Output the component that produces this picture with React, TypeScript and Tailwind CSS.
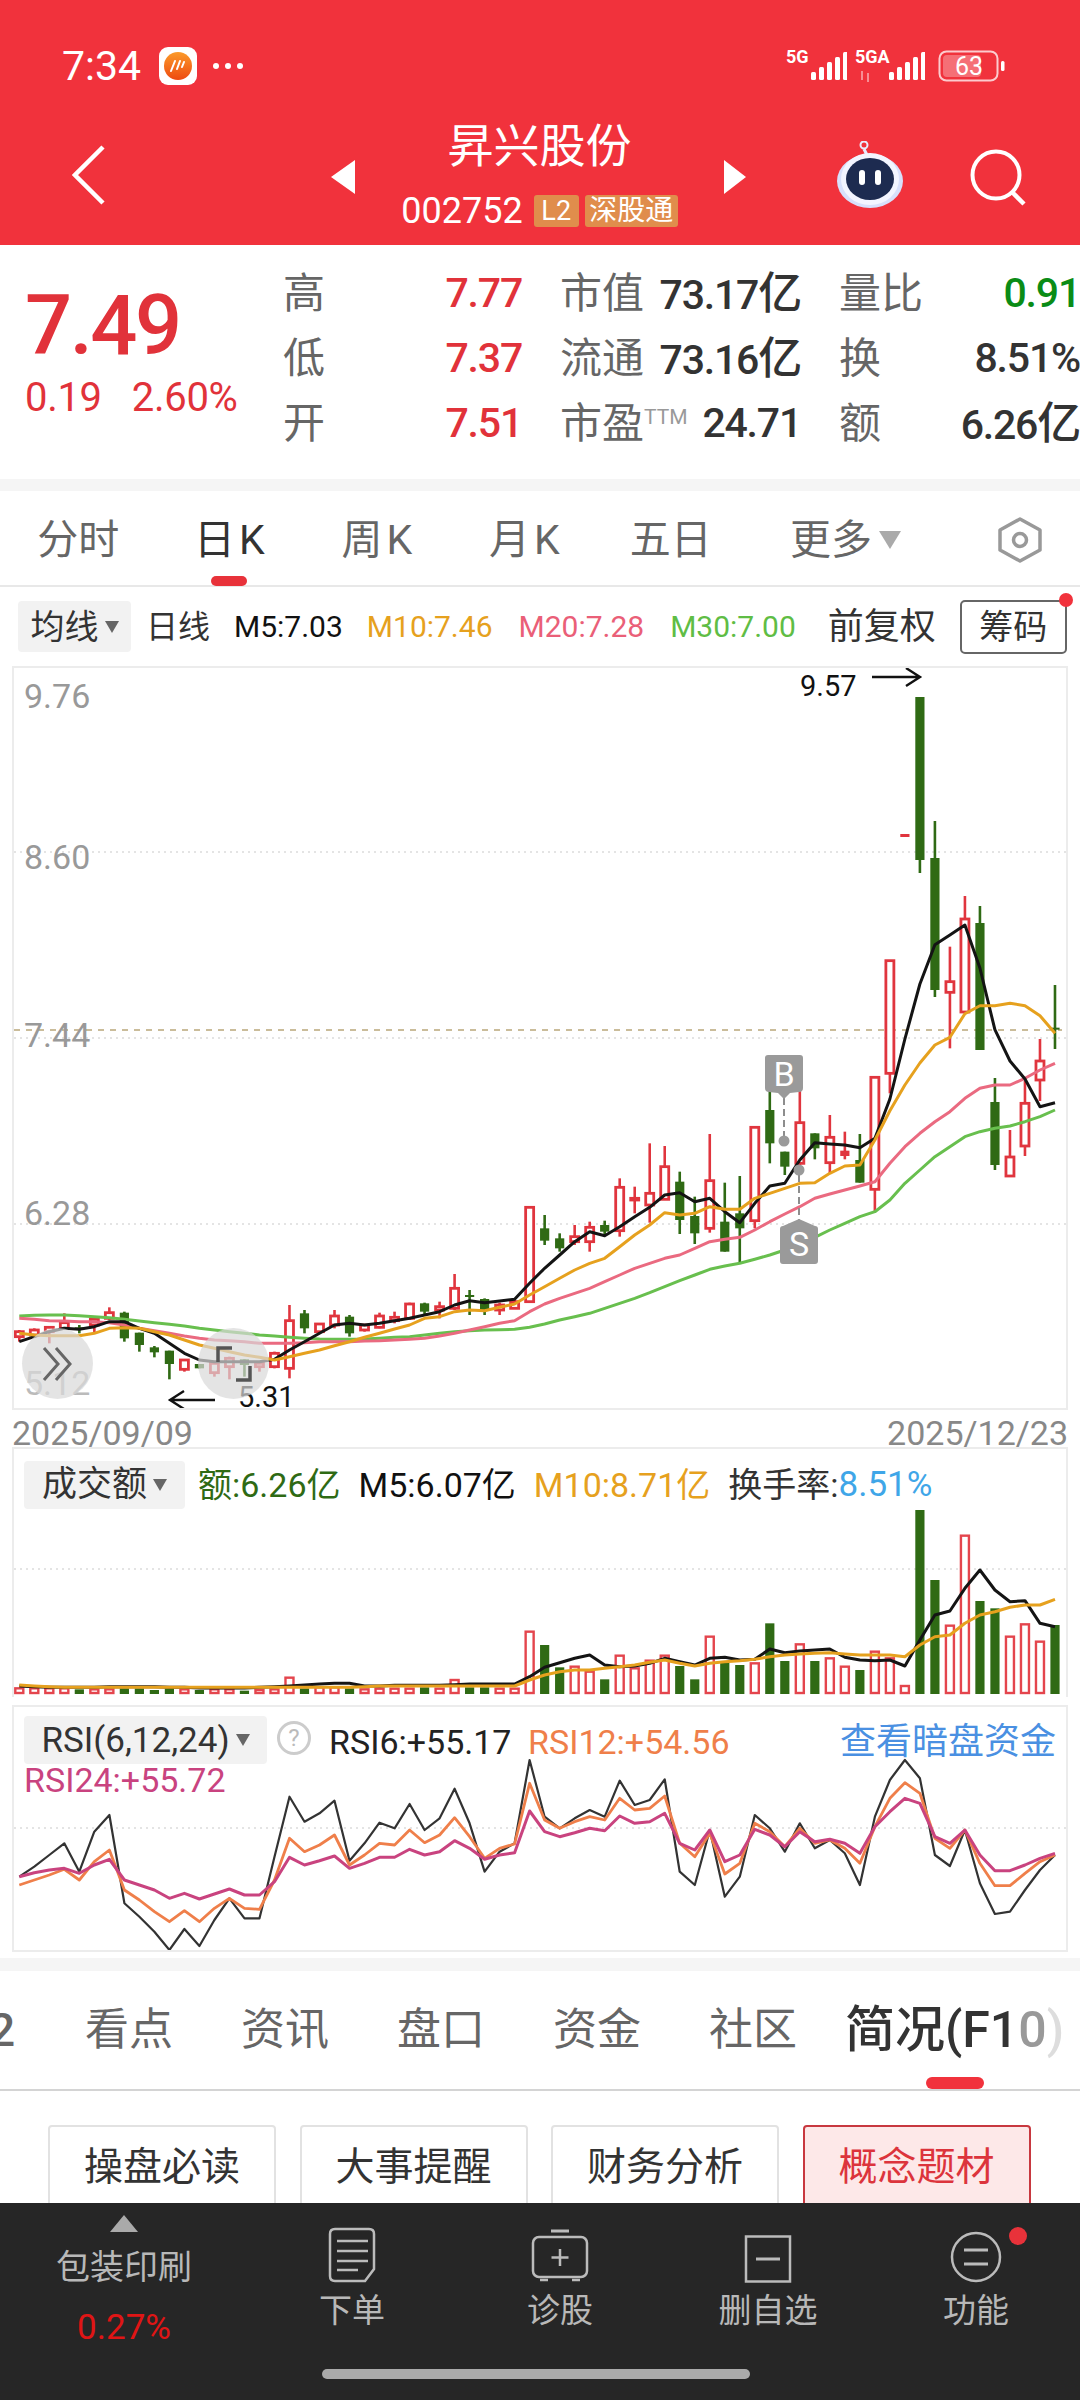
import React from "react";

const x = (i: number) => 19.3 + 15.01 * i;
const RED = "#e0353e";
const GRN = "#2f6a14";

type C = [string, number, number, number, number];
// kind, high, bodyTop, bodyBottom, low (coordinates measured from y = 1000, in thirds of a pixel)
const candles: C[] = [
  ["r", 990, 995, 1010, 1025], ["r", 985, 990, 1005, 1010], ["r", 980, 982, 995, 1030], ["r", 940, 968, 985, 990], ["g", 975, 982, 990, 1000],
  ["r", 950, 958, 975, 1000], ["r", 922, 938, 955, 960], ["g", 935, 938, 1015, 1025], ["g", 998, 998, 1035, 1055], ["g", 1038, 1042, 1057, 1072],
  ["g", 1052, 1052, 1092, 1138], ["r", 1078, 1080, 1108, 1115], ["g", 1092, 1092, 1105, 1105], ["r", 1085, 1090, 1118, 1130], ["r", 1070, 1075, 1100, 1138],
  ["g", 1078, 1078, 1095, 1130], ["r", 1085, 1090, 1100, 1115], ["r", 1055, 1060, 1100, 1105], ["r", 915, 962, 1105, 1135], ["g", 930, 940, 985, 1000],
  ["r", 970, 972, 995, 998], ["r", 930, 948, 975, 985], ["g", 945, 950, 1000, 1010], ["r", 972, 975, 990, 995], ["r", 938, 948, 982, 985],
  ["r", 935, 952, 962, 970], ["r", 908, 912, 955, 960], ["g", 908, 910, 935, 945], ["r", 905, 920, 930, 955], ["r", 822, 865, 925, 930],
  ["g", 870, 885, 890, 945], ["g", 895, 897, 930, 945], ["r", 908, 915, 930, 945], ["r", 900, 905, 925, 925], ["r", 622, 622, 905, 905],
  ["g", 645, 685, 722, 735], ["g", 700, 715, 745, 755], ["r", 675, 710, 725, 735], ["r", 665, 682, 725, 755], ["g", 662, 675, 695, 705],
  ["r", 535, 562, 692, 710], ["r", 560, 595, 600, 640], ["r", 430, 580, 615, 668], ["r", 438, 500, 598, 600], ["g", 515, 545, 660, 702],
  ["g", 590, 648, 700, 732], ["r", 402, 542, 685, 698], ["g", 548, 665, 755, 755], ["g", 528, 640, 685, 790], ["r", 382, 382, 662, 685],
  ["g", 245, 330, 430, 490], ["g", 455, 455, 500, 525], ["r", 185, 368, 490, 520], ["g", 400, 400, 445, 478], ["r", 345, 412, 488, 520],
  ["f", 395, 452, 468, 478], ["g", 402, 480, 548, 548], ["r", 232, 232, 568, 635], ["r", -118, -118, 220, 280], ["f", -498, -498, -490, -490],
  ["g", -909, -909, -420, -381], ["g", -537, -426, -30, -9], ["r", -160, -55, -23, 145], ["r", -312, -243, 36, 36], ["g", -282, -231, 150, 150],
  ["g", 234, 306, 495, 510], ["r", 390, 471, 528, 528], ["r", 243, 310, 438, 468], ["r", 117, 183, 240, 303], ["g", -45, 83, 88, 147],
];
const ma5 = [1025, 1010, 995, 985, 988, 980, 965, 965, 985, 1000, 1030, 1060, 1080, 1085, 1085, 1085, 1085, 1078, 1050, 1025, 1000, 975, 970, 975, 970, 962, 955, 945, 935, 915, 902, 908, 903, 898, 850, 805, 765, 725, 695, 707, 680, 650, 622, 585, 578, 605, 595, 635, 668, 610, 558, 550, 480, 428, 432, 435, 443, 415, 297, 117, -48, -166, -195, -225, -96, 89, 183, 237, 320, 308];
const ma10 = [1000, 1005, 1007, 1007, 1007, 1000, 985, 983, 985, 995, 1005, 1020, 1035, 1045, 1055, 1065, 1072, 1080, 1070, 1060, 1050, 1037, 1025, 1012, 1000, 987, 975, 955, 950, 935, 930, 932, 922, 912, 885, 860, 835, 810, 790, 775, 740, 705, 675, 638, 645, 640, 620, 628, 628, 595, 580, 565, 550, 548, 520, 498, 495, 420, 332, 255, 189, 135, 112, 41, 17, 17, 10, 17, 47, 100];
const ma20 = [955, 958, 962, 963, 965, 965, 968, 975, 985, 992, 1000, 1008, 1015, 1020, 1022, 1025, 1030, 1030, 1030, 1028, 1025, 1025, 1025, 1023, 1022, 1020, 1018, 1015, 1008, 1000, 990, 980, 970, 962, 935, 912, 895, 880, 865, 845, 825, 805, 790, 775, 765, 745, 725, 718, 712, 690, 665, 642, 620, 595, 582, 570, 558, 545, 490, 440, 400, 365, 335, 295, 265, 255, 255, 235, 210, 190];
const ma30 = [948, 946, 945, 945, 947, 950, 953, 958, 963, 968, 973, 978, 985, 990, 995, 1000, 1005, 1008, 1012, 1015, 1017, 1018, 1018, 1017, 1015, 1012, 1010, 1005, 1000, 995, 992, 990, 989, 988, 982, 972, 960, 950, 940, 925, 910, 895, 878, 860, 842, 825, 808, 798, 790, 778, 765, 750, 735, 712, 690, 670, 650, 635, 600, 550, 510, 470, 440, 410, 395, 385, 378, 365, 350, 330];

const vols: [string, number][] = [
  ["r", 715], ["r", 715], ["r", 715], ["r", 715], ["g", 718], ["r", 718], ["r", 718], ["g", 715], ["g", 715], ["g", 720],
  ["g", 715], ["r", 718], ["g", 720], ["r", 718], ["r", 718], ["g", 722], ["r", 720], ["r", 718], ["r", 683], ["g", 715],
  ["r", 712], ["r", 712], ["g", 715], ["r", 718], ["r", 716], ["r", 716], ["r", 716], ["g", 712], ["r", 716], ["r", 690],
  ["g", 712], ["g", 712], ["r", 716], ["r", 716], ["r", 545], ["g", 585], ["g", 652], ["r", 650], ["r", 665], ["g", 688],
  ["r", 617], ["r", 655], ["r", 632], ["r", 617], ["g", 648], ["g", 688], ["r", 560], ["g", 635], ["g", 645], ["r", 640],
  ["g", 520], ["g", 633], ["r", 583], ["g", 633], ["r", 625], ["r", 650], ["g", 660], ["r", 605], ["r", 625], ["r", 708],
  ["g", 178], ["g", 390], ["r", 527], ["r", 257], ["g", 453], ["g", 475], ["r", 560], ["r", 523], ["r", 575], ["g", 525],
];
const vm5 = [708, 710, 712, 712, 712, 712, 710, 710, 710, 710, 712, 712, 714, 714, 714, 714, 712, 710, 708, 705, 702, 700, 700, 708, 708, 706, 706, 706, 706, 704, 702, 702, 702, 702, 680, 652, 638, 625, 615, 645, 650, 648, 640, 625, 635, 645, 625, 622, 630, 628, 597, 608, 603, 600, 597, 622, 630, 632, 630, 648, 570, 495, 483, 415, 360, 420, 455, 452, 520, 530];
const vm10 = [705, 708, 710, 712, 712, 712, 712, 712, 712, 712, 712, 712, 712, 712, 712, 712, 712, 712, 712, 712, 712, 712, 712, 710, 708, 708, 708, 708, 708, 708, 708, 708, 708, 708, 690, 675, 665, 660, 660, 655, 650, 645, 637, 630, 640, 648, 640, 635, 632, 628, 620, 615, 612, 610, 608, 612, 615, 615, 615, 620, 585, 560, 555, 520, 495, 485, 472, 465, 465, 448];
const r6 = [1280, 1250, 1215, 1180, 1265, 1145, 1095, 1360, 1400, 1445, 1500, 1437, 1488, 1410, 1345, 1405, 1405, 1220, 1040, 1115, 1090, 1052, 1232, 1180, 1118, 1135, 1062, 1140, 1105, 1016, 1120, 1265, 1205, 1180, 930, 1100, 1135, 1105, 1080, 1100, 992, 1065, 1050, 988, 1265, 1305, 1140, 1340, 1280, 1095, 1135, 1205, 1120, 1195, 1170, 1210, 1305, 1100, 990, 930, 985, 1215, 1248, 1140, 1300, 1392, 1385, 1320, 1260, 1215];
const r12 = [1305, 1290, 1275, 1258, 1290, 1235, 1200, 1320, 1350, 1385, 1415, 1382, 1415, 1375, 1345, 1375, 1378, 1290, 1165, 1205, 1185, 1155, 1245, 1215, 1180, 1185, 1140, 1178, 1155, 1103, 1160, 1225, 1195, 1182, 1000, 1110, 1135, 1115, 1100, 1110, 1045, 1080, 1075, 1038, 1180, 1220, 1150, 1272, 1240, 1120, 1145, 1190, 1135, 1180, 1170, 1195, 1240, 1130, 1045, 998, 1030, 1165, 1195, 1140, 1240, 1307, 1307, 1270, 1235, 1215];
const r24 = [1280, 1268, 1260, 1255, 1270, 1245, 1228, 1290, 1305, 1320, 1345, 1330, 1347, 1332, 1317, 1335, 1335, 1295, 1222, 1245, 1232, 1218, 1255, 1240, 1222, 1222, 1198, 1215, 1205, 1172, 1195, 1228, 1215, 1208, 1083, 1145, 1160, 1148, 1135, 1142, 1098, 1120, 1115, 1090, 1180, 1200, 1140, 1235, 1215, 1138, 1155, 1190, 1145, 1175, 1168, 1180, 1210, 1130, 1085, 1045, 1060, 1160, 1180, 1140, 1215, 1262, 1262, 1245, 1225, 1210];

const py = (v: number) => 1000 + v / 3;
const pv = (v: number) => 1450 + v / 3;
const pts = (a: number[], f: (n: number) => number) => a.map((v, i) => `${x(i).toFixed(1)},${f(v).toFixed(1)}`).join(" ");

function Line({ d, f, c, w = 3 }: { d: number[]; f: (n: number) => number; c: string; w?: number }) {
  return <polyline points={pts(d, f)} fill="none" stroke={c} strokeWidth={w} strokeLinejoin="round" />;
}

function MainChart() {
  return (
    <svg viewBox="14 668 1052 740" width={1052} height={740} className="block">
      {[852, 1038, 1224].map((y) => (
        <line key={y} x1={14} x2={1066} y1={y} y2={y} stroke="#dcdcdc" strokeWidth={1.5} strokeDasharray="2 4" />
      ))}
      <line x1={14} x2={1062} y1={1030} y2={1030} stroke="#b9a679" strokeWidth={1.5} strokeDasharray="6 6" />
      {candles.map(([k, hi, t, b, lo], i) => {
        const cx = x(i);
        const col = k === "g" ? GRN : RED;
        if (k === "g")
          return (
            <g key={i}>
              <line x1={cx} x2={cx} y1={py(hi)} y2={py(lo)} stroke={col} strokeWidth={2.6} />
              <rect x={cx - 4.6} y={py(t)} width={9.2} height={Math.max(py(b) - py(t), 2)} fill={col} />
            </g>
          );
        if (k === "f")
          return (
            <g key={i}>
              <line x1={cx} x2={cx} y1={py(hi)} y2={py(lo)} stroke={col} strokeWidth={2.6} />
              <rect x={cx - 4.6} y={py(t)} width={9.2} height={Math.max(py(b) - py(t), 3)} fill={col} />
            </g>
          );
        return (
          <g key={i}>
            <line x1={cx} x2={cx} y1={py(hi)} y2={py(t)} stroke={col} strokeWidth={2.6} />
            <line x1={cx} x2={cx} y1={py(b)} y2={py(lo)} stroke={col} strokeWidth={2.6} />
            <rect x={cx - 4} y={py(t)} width={8} height={py(b) - py(t)} fill="#fff" stroke={col} strokeWidth={2.8} />
          </g>
        );
      })}
      <Line d={ma30} f={py} c="#68bf4e" />
      <Line d={ma20} f={py} c="#ea6a80" />
      <Line d={ma5} f={py} c="#141414" />
      <Line d={ma10} f={py} c="#e6a11e" />
      <path d="M872 677H919M906 668L920 677L906 686" fill="none" stroke="#111" strokeWidth={2.4} />
      <path d="M215 1400H171M184 1391L170 1400L184 1409" fill="none" stroke="#111" strokeWidth={2.4} />
      <line x1={784} x2={784} y1={1098} y2={1136} stroke="#8d8d8d" strokeWidth={2} strokeDasharray="7 4" />
      <circle cx={784} cy={1141} r={5.5} fill="#9a9a9a" />
      <line x1={799} x2={799} y1={1175} y2={1226} stroke="#8d8d8d" strokeWidth={2} strokeDasharray="7 4" />
      <circle cx={799} cy={1170} r={5.5} fill="#9a9a9a" />
      <path d="M768 1055H800Q803 1055 803 1058V1088Q803 1092 799 1092L790 1093L784 1099L778 1093L769 1092Q765 1092 765 1088V1058Q765 1055 768 1055Z" fill="#9a9a9a" />
      <path d="M783 1226L799 1219L815 1226Q818 1226 818 1229V1261Q818 1264 815 1264H783Q780 1264 780 1261V1229Q780 1226 783 1226Z" fill="#9a9a9a" />
    </svg>
  );
}

function VolChart() {
  return (
    <svg viewBox="14 1510 1052 186" width={1052} height={186} className="block">
      <line x1={14} x2={1066} y1={1569} y2={1569} stroke="#dcdcdc" strokeWidth={1.5} strokeDasharray="2 4" />
      {vols.map(([k, t], i) => {
        const top = pv(t);
        return k === "g" ? (
          <rect key={i} x={x(i) - 4.6} y={top} width={9.2} height={1694 - top} fill={GRN} />
        ) : (
          <rect key={i} x={x(i) - 4} y={top} width={8} height={1693 - top} fill="#fff" stroke="#e4454d" strokeWidth={2.4} />
        );
      })}
      <Line d={vm5} f={pv} c="#141414" />
      <Line d={vm10} f={pv} c="#e6a11e" />
    </svg>
  );
}

function RsiChart() {
  return (
    <svg viewBox="14 1707 1052 243" width={1052} height={243} className="block">
      <line x1={14} x2={1066} y1={1828} y2={1828} stroke="#dcdcdc" strokeWidth={1.5} strokeDasharray="2 4" />
      <Line d={r6} f={pv} c="#333333" w={2.2} />
      <Line d={r12} f={pv} c="#ef7f4a" w={2.8} />
      <Line d={r24} f={pv} c="#c9437f" w={3} />
    </svg>
  );
}

function Signal({ label, w, arrows }: { label: string; w: number; arrows?: boolean }) {
  return (
    <svg width={w} height={46} viewBox={`0 -6 ${w} 46`} className="block">
      <text x={0} y={14} fontSize={18} fontWeight={700} fill="#fff" fontFamily="Roboto, sans-serif">{label}</text>
      {arrows && <path d="M7 22V31M13 24V33" stroke="#fff" strokeOpacity={0.45} strokeWidth={2} />}
      {[0, 1, 2, 3, 4].map((n) => (
        <rect key={n} x={w - 36 + n * 8} y={31 - (8 + n * 5)} width={5} height={8 + n * 5} rx={1.5} fill="#fff" />
      ))}
    </svg>
  );
}

function Info({ l, v, c = "text-[#333]", sup }: { l: string; v: string; c?: string; sup?: boolean }) {
  const yi = v.endsWith("亿");
  return (
    <div className="flex h-[65px] items-center justify-between">
      <span className="text-[42px] leading-none text-[#666]">
        {l}
        {sup && <span className="align-[14px] text-[21px] text-[#999]">TTM</span>}
      </span>
      <span className={`text-[41px] leading-none font-medium tracking-[-1.2px] ${c}`}>
        {yi ? v.slice(0, -1) : v}
        {yi && <span className="text-[44px]">亿</span>}
      </span>
    </div>
  );
}

function Drop() {
  return <span className="ml-[6px] h-0 w-0 border-x-[7px] border-t-[12px] border-x-transparent border-t-[#666]" />;
}

const tabs = ["看点", "资讯", "盘口", "资金", "社区"];
const btns = ["操盘必读", "大事提醒", "财务分析"];

function BarItem({ icon, label }: { icon: React.ReactNode; label: string }) {
  return (
    <div className="relative flex w-[208px] flex-col items-center">
      <div className="flex h-[84px] items-end pb-[4px]">{icon}</div>
      <span className="mt-[2px] text-[33px] leading-[44px] text-[#b8b8b8]">{label}</span>
    </div>
  );
}

export default function App() {
  return (
    <div className="flex h-[2400px] w-[1080px] flex-col overflow-hidden bg-white font-['Roboto','Noto_Sans_CJK_SC',sans-serif]">
      {/* Red header */}
      <div className="h-[245px] shrink-0 bg-[#f1323c] text-white">
        <div className="flex h-[120px] items-center pt-[12px]">
          <span className="ml-[62px] text-[41px] leading-none">7:34</span>
          <svg width={38} height={38} viewBox="0 0 38 38" className="ml-[18px]">
            <defs>
              <linearGradient id="ap" x1="0" y1="0" x2="0" y2="1">
                <stop offset="0" stopColor="#fb9a2a" />
                <stop offset="1" stopColor="#ee4a10" />
              </linearGradient>
            </defs>
            <rect width={38} height={38} rx={9} fill="#fff" />
            <circle cx={19} cy={19} r={14} fill="url(#ap)" />
            <path d="M12 24L16 14M18 22L21 14M23 20L25 15" stroke="#fff" strokeWidth={2} strokeLinecap="round" />
          </svg>
          <div className="ml-[16px] flex gap-[6px]">
            <span className="size-[6px] rounded-full bg-white" />
            <span className="size-[6px] rounded-full bg-white" />
            <span className="size-[6px] rounded-full bg-white" />
          </div>
          <div className="ml-auto flex items-center gap-[8px]">
            <Signal label="5G" w={61} />
            <Signal label="5GA" w={70} arrows />
          </div>
          <svg width={67} height={34} viewBox="0 0 67 34" className="mr-[75px] ml-[13px]">
            <rect x={1.5} y={2.5} width={58} height={29} rx={7} fill="none" stroke="#fff" strokeOpacity={0.75} strokeWidth={2} />
            <rect x={5} y={6} width={38} height={22} rx={4} fill="#fff" fillOpacity={0.3} />
            <rect x={63} y={12} width={3.5} height={10} rx={1.5} fill="#fff" />
            <text x={31} y={26} fontSize={25} fill="#fff" textAnchor="middle" fontFamily="Roboto, sans-serif">63</text>
          </svg>
        </div>
        <div className="flex h-[125px] items-start pl-[72px]">
          <svg width={33} height={60} viewBox="0 0 33 60" className="mt-[25px]">
            <path d="M31 2L3 30L31 58" fill="none" stroke="#fff" strokeWidth={4.5} />
          </svg>
          <span className="mt-[40px] ml-[226px] h-0 w-0 border-y-[17px] border-r-[24px] border-y-transparent border-r-white" />
          <div className="flex w-[369px] flex-col items-center">
            <div className="flex h-[52px] items-center text-[46px] leading-none">昇兴股份</div>
            <div className="mt-[21px] flex h-[36px] items-center">
              <span className="text-[36px] leading-none">002752</span>
              <span className="ml-[11px] flex h-[32px] w-[45px] items-center justify-center rounded-[3px] bg-[#e08d4c] text-[27px] leading-none">L2</span>
              <span className="ml-[6px] flex h-[32px] w-[93px] items-center justify-center rounded-[3px] bg-[#e08d4c] text-[28px] leading-none">深股通</span>
            </div>
          </div>
          <span className="mt-[40px] h-0 w-0 border-y-[17px] border-l-[22px] border-y-transparent border-l-white" />
          <svg width={68} height={68} viewBox="0 0 68 68" className="mt-[21px] ml-[90px]">
            <circle cx={28} cy={4} r={3.5} fill="none" stroke="#e8ecff" strokeWidth={2} />
            <path d="M28 8L31 14" stroke="#e8ecff" strokeWidth={3} />
            <ellipse cx={34} cy={40} rx={33} ry={27} fill="#d8e0fb" />
            <ellipse cx={34} cy={38} rx={29} ry={26} fill="#f3f5ff" />
            <ellipse cx={34} cy={38} rx={24} ry={21} fill="#1d2b50" />
            <rect x={23} y={29} width={6} height={15} rx={3} fill="#fff" />
            <rect x={39} y={29} width={6} height={15} rx={3} fill="#fff" />
          </svg>
          <svg width={58} height={58} viewBox="0 0 58 58" className="mt-[29px] ml-[66px]">
            <circle cx={26} cy={26} r={23.5} fill="none" stroke="#fff" strokeWidth={4} />
            <path d="M42 43L54 55" stroke="#fff" strokeWidth={4.5} />
          </svg>
        </div>
      </div>

      {/* Quote info */}
      <div className="flex h-[234px] shrink-0">
        <div className="w-[283px] shrink-0 pt-[36px] pl-[25px]">
          <div className="text-[83px] leading-[90px] font-medium tracking-[-2.5px] text-[#e1323a]">7.49</div>
          <div className="mt-[3px] flex gap-[30px] text-[40px] leading-[48px] tracking-[-0.3px] text-[#e1323a]">
            <span>0.19</span>
            <span>2.60%</span>
          </div>
        </div>
        <div className="grid flex-1 grid-cols-[239px_241px_241px] content-start gap-x-[38px] pt-[16px]">
          <Info l="高" v="7.77" c="text-[#e1323a]" />
          <Info l="市值" v="73.17亿" />
          <Info l="量比" v="0.91" c="text-[#0a8c16]" />
          <Info l="低" v="7.37" c="text-[#e1323a]" />
          <Info l="流通" v="73.16亿" />
          <Info l="换" v="8.51%" />
          <Info l="开" v="7.51" c="text-[#e1323a]" />
          <Info l="市盈" v="24.71" sup />
          <Info l="额" v="6.26亿" />
        </div>
      </div>
      <div className="h-[12px] shrink-0 bg-[#f5f5f5]" />

      {/* Period tabs */}
      <div className="relative flex h-[96px] shrink-0 items-start border-b-2 border-[#e8e8e8] pt-[25px] pl-[5px] text-[41px] leading-[48px] text-[#666]">
        <span className="w-[146.5px] text-center">分时</span>
        <span className="ml-[4.5px] w-[146.5px] text-center text-[#333]">日<span className="ml-[4px]">K</span></span>
        <span className="ml-[1px] w-[146.5px] text-center">周<span className="ml-[4px]">K</span></span>
        <span className="ml-[1px] w-[146.5px] text-center">月<span className="ml-[4px]">K</span></span>
        <span className="w-[146.5px] text-center">五日</span>
        <div className="ml-[46px] flex items-center">
          <span>更多</span>
          <span className="ml-[7px] h-0 w-0 border-x-[11px] border-t-[18px] border-x-transparent border-t-[#aaa]" />
        </div>
        <svg width={48} height={48} viewBox="0 0 48 48" className="ml-[95px]">
          <path d="M24 3L44 14V34L24 45L4 34V14Z" fill="none" stroke="#999" strokeWidth={3.5} strokeLinejoin="round" />
          <circle cx={24} cy={24} r={6.5} fill="none" stroke="#999" strokeWidth={3.5} />
        </svg>
        <span className="absolute top-[85px] left-[211px] h-[10px] w-[36px] rounded-full bg-[#e8323a]" />
      </div>

      {/* Legend */}
      <div className="flex h-[79px] shrink-0 items-center pl-[18px] text-[30px] leading-none whitespace-nowrap">
        <div className="flex h-[51px] w-[113px] items-center justify-center rounded-[4px] bg-[#f2f2f2] text-[34px] text-[#333]">
          均线
          <Drop />
        </div>
        <span className="ml-[15px] text-[32px] text-[#333]">日线</span>
        <span className="ml-[24px] text-[#111]">M5:7.03</span>
        <span className="ml-[24px] text-[#e6a11e]">M10:7.46</span>
        <span className="ml-[26px] text-[#ea5f78]">M20:7.28</span>
        <span className="ml-[26px] text-[#5fbd45]">M30:7.00</span>
        <span className="ml-[32px] text-[36px] text-[#333]">前复权</span>
        <div className="relative ml-[24px] flex h-[54px] w-[107px] items-center justify-center rounded-[5px] border-2 border-[#666] text-[34px] text-[#333]">
          筹码
          <span className="absolute -top-[9px] -right-[8px] size-[14px] rounded-full bg-[#f1323c]" />
        </div>
      </div>

      {/* Main chart */}
      <div className="shrink-0 pl-[12px]">
        <div className="relative h-[744px] w-[1056px] border-2 border-[#ececec]">
          <MainChart />
          <span className="absolute top-[8px] left-[10px] text-[34px] leading-[40px] text-[#999]">9.76</span>
          <span className="absolute top-[169px] left-[10px] text-[34px] leading-[40px] text-[#999]">8.60</span>
          <span className="absolute top-[347px] left-[10px] text-[34px] leading-[40px] text-[#999]">7.44</span>
          <span className="absolute top-[525px] left-[10px] text-[34px] leading-[40px] text-[#999]">6.28</span>
          <span className="absolute top-[695px] left-[10px] text-[34px] leading-[40px] text-[#bbb]">5.12</span>
          <span className="absolute top-[0px] left-[786px] text-[29px] leading-[36px] text-[#111]">9.57</span>
          <span className="absolute top-[711px] left-[224px] text-[29px] leading-[36px] text-[#111]">5.31</span>
          <span className="absolute top-[387px] left-[751px] flex h-[38px] w-[38px] items-center justify-center text-[34px] leading-none text-white">B</span>
          <span className="absolute top-[557px] left-[766px] flex h-[38px] w-[38px] items-center justify-center text-[34px] leading-none text-white">S</span>
          <div className="absolute top-[660px] left-[8px] flex size-[71px] items-center justify-center rounded-full bg-[#d9d9d9]/70">
            <svg width={44} height={44} viewBox="0 0 44 44">
              <path d="M8 6L22 22L8 38M20 6L34 22L20 38" fill="none" stroke="#666" strokeWidth={3} />
            </svg>
          </div>
          <div className="absolute top-[660px] left-[184px] flex size-[71px] items-center justify-center rounded-full bg-[#d9d9d9]/70">
            <svg width={40} height={40} viewBox="0 0 40 40">
              <path d="M4 18V4H18M36 22V36H22" fill="none" stroke="#555" strokeWidth={3.5} />
            </svg>
          </div>
        </div>
      </div>

      {/* Dates */}
      <div className="flex h-[37px] w-[1068px] shrink-0 items-center justify-between pt-[8px] pl-[12px] text-[34px] leading-none text-[#888]">
        <span>2025/09/09</span>
        <span>2025/12/23</span>
      </div>

      {/* Volume */}
      <div className="shrink-0 pl-[12px]">
        <div className="h-[250px] w-[1056px] border-2 border-b-0 border-[#ececec]">
          <div className="flex h-[61px] items-center pt-[10px] pl-[10px] text-[34px] leading-none whitespace-nowrap">
            <div className="flex h-[48px] w-[161px] items-center justify-center rounded-[4px] bg-[#f2f2f2] text-[35px] text-[#333]">
              成交额
              <Drop />
            </div>
            <span className="ml-[13px] text-[#2f6a14]">额:6.26亿</span>
            <span className="ml-[18px] text-[#111]">M5:6.07亿</span>
            <span className="ml-[18px] text-[#e6a11e]">M10:8.71亿</span>
            <span className="ml-[18px] text-[#333]">换手率:</span>
            <span className="text-[35px] text-[#3fa6e8]">8.51%</span>
          </div>
          <VolChart />
        </div>
      </div>
      <div className="h-[8px] shrink-0" />

      {/* RSI */}
      <div className="shrink-0 pl-[12px]">
        <div className="relative h-[247px] w-[1056px] border-2 border-[#ececec]">
          <RsiChart />
          <div className="absolute top-[9px] left-[10px] flex h-[48px] w-[243px] items-center justify-center rounded-[4px] bg-[#f2f2f2] text-[35px] leading-none text-[#333]">
            RSI(6,12,24)
            <Drop />
          </div>
          <span className="absolute top-[14px] left-[263px] flex size-[34px] items-center justify-center rounded-full border-[3px] border-[#ccc] text-[24px] leading-none text-[#bbb]">?</span>
          <span className="absolute top-[16px] left-[315px] text-[34px] leading-[38px] whitespace-nowrap text-[#222]">RSI6:+55.17</span>
          <span className="absolute top-[16px] left-[514px] text-[34px] leading-[38px] whitespace-nowrap text-[#ef7f4a]">RSI12:+54.56</span>
          <span className="absolute top-[14px] left-[826px] text-[36px] leading-[42px] whitespace-nowrap text-[#4a90e2]">查看暗盘资金</span>
          <span className="absolute top-[54px] left-[10px] text-[34px] leading-[38px] whitespace-nowrap text-[#c9437f]">RSI24:+55.72</span>
        </div>
      </div>
      <div className="h-[6px] shrink-0" />
      <div className="h-[13px] shrink-0 bg-[#f5f5f5]" />

      {/* Section tabs */}
      <div className="relative flex h-[120px] shrink-0 items-center border-b-2 border-[#d4d4d4] text-[44px] leading-none text-[#666]">
        <span className="absolute left-[-11px] text-[46px] font-medium">2</span>
        <div className="ml-[85px] flex gap-[68px]">
          {tabs.map((t) => (
            <span key={t}>{t}</span>
          ))}
        </div>
        <span className="ml-[48px] text-[50px] font-medium whitespace-nowrap text-[#333]">
          简况(F1<span className="text-[#999]">0</span>
          <span className="text-[#ddd]">)</span>
        </span>
        <span className="absolute bottom-0 left-[926px] h-[12px] w-[58px] rounded-full bg-[#f1323c]" />
      </div>

      {/* Buttons */}
      <div className="flex h-[112px] shrink-0 items-start gap-[23.5px] overflow-hidden pt-[34px] pl-[48px]">
        {btns.map((b) => (
          <div key={b} className="flex h-[110px] w-[228px] shrink-0 justify-center rounded-[4px] border-2 border-[#e2e2e2] pt-[16px] text-[39px] leading-[48px] text-[#333]">
            {b}
          </div>
        ))}
        <div className="flex h-[110px] w-[228px] shrink-0 justify-center rounded-[4px] border-2 border-[#c8383f] bg-[#fde8e8] pt-[16px] text-[39px] leading-[48px] text-[#dc343c]">
          概念题材
        </div>
      </div>

      {/* Bottom bar */}
      <div className="relative flex h-[197px] shrink-0 items-start bg-[#262626]">
        <div className="flex w-[248px] flex-col items-center pt-[12px]">
          <span className="h-0 w-0 border-x-[14px] border-b-[17px] border-x-transparent border-b-[#aaa]" />
          <span className="mt-[13px] text-[34px] leading-[44px] text-[#b8b8b8]">包装印刷</span>
          <span className="mt-[17px] text-[35px] leading-[44px] text-[#e01515]">0.27%</span>
        </div>
        <BarItem
          label="下单"
          icon={
            <svg width={48} height={56} viewBox="0 0 48 56">
              <path d="M7 2H41Q46 2 46 7V42L37 54H7Q2 54 2 49V7Q2 2 7 2Z" fill="none" stroke="#bbb" strokeWidth={2.5} />
              <path d="M9 14H40M9 24H40M9 34H40M9 43H30" stroke="#bbb" strokeWidth={2.5} />
            </svg>
          }
        />
        <BarItem
          label="诊股"
          icon={
            <svg width={58} height={54} viewBox="0 0 58 54">
              <path d="M20 2H38" stroke="#bbb" strokeWidth={3} />
              <rect x={2} y={8} width={54} height={40} rx={6} fill="none" stroke="#bbb" strokeWidth={2.5} />
              <path d="M29 20V37M20.5 28.5H37.5M9 51H17M41 51H49" stroke="#bbb" strokeWidth={2.5} />
            </svg>
          }
        />
        <BarItem
          label="删自选"
          icon={
            <svg width={48} height={48} viewBox="0 0 48 48">
              <rect x={2} y={1.5} width={44} height={45} fill="none" stroke="#bbb" strokeWidth={2.5} />
              <path d="M12 24H36" stroke="#bbb" strokeWidth={3} />
            </svg>
          }
        />
        <BarItem
          label="功能"
          icon={
            <svg width={52} height={52} viewBox="0 0 52 52">
              <circle cx={26} cy={26} r={24} fill="none" stroke="#bbb" strokeWidth={2.5} />
              <path d="M14 19H38M14 33H38" stroke="#bbb" strokeWidth={3} />
            </svg>
          }
        />
        <span className="absolute top-[24px] left-[1009px] size-[18px] rounded-full bg-[#e8323a]" />
        <span className="absolute top-[166px] left-[322px] h-[10px] w-[428px] rounded-full bg-[#aaaaaa]" />
      </div>
    </div>
  );
}
